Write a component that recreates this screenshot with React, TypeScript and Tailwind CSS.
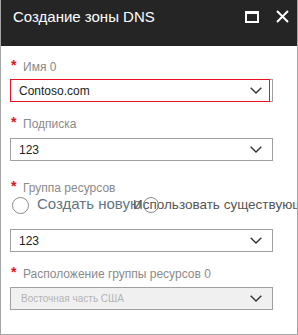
import React from "react";

const font = { fontFamily: '"Liberation Sans", "Noto Sans", Arial, sans-serif' };

function Chevron() {
  return (
    <svg width="12" height="7" viewBox="0 0 12 7" className="shrink-0">
      <path d="M0.7 0.7 L6 6 L11.3 0.7" fill="none" stroke="#333" strokeWidth="1.4" />
    </svg>
  );
}

function Label({ text, size = "text-[12px]" }: { text: string; size?: string }) {
  return (
    <div className="flex items-center h-[16px] pl-[1px]">
      <span className="text-[#e8101a] text-[14px] leading-none -mt-[5px] w-[12px] font-bold">*</span>
      <span className={`${size} text-[#8a8a8a] leading-[16px]`}>{text}</span>
    </div>
  );
}

function Select({
  value,
  disabled = false,
  focused = false,
  className = "",
}: {
  value: string;
  disabled?: boolean;
  focused?: boolean;
  className?: string;
}) {
  return (
    <div
      className={`relative w-[263px] h-[23px] border border-[#a0a0a0] flex items-center justify-between pr-[10px] ${
        disabled ? "bg-[#f0f0f0] pl-[10px]" : "bg-white pl-[8px]"
      } ${className}`}
    >
      {focused && (
        <div className="absolute -left-[1px] -top-[1px] w-[260px] h-[23px] border border-[#e81123] pointer-events-none" />
      )}
      <span className={disabled ? "text-[10px] text-[#b4b4b4]" : "text-[12px] text-[#222]"}>{value}</span>
      <Chevron />
    </div>
  );
}

export default function App() {
  return (
    <div className="w-[298px] h-[335px] bg-white border border-[#a6a6a6] border-t-0 overflow-hidden" style={font}>
      <div className="h-[46px] bg-[#252525] -ml-[1px] flex items-start pt-[7px] pl-[13px] pr-[8px]">
        <span className="text-white text-[15px] leading-[20px] flex-1">Создание зоны DNS</span>
        <div className="flex items-center gap-[17px] mt-[3px]">
          <div className="w-[14px] h-[12px] border-2 border-t-[3px] border-white" />
          <svg width="13" height="13" viewBox="0 0 13 13">
            <path d="M1 1 L12 12 M12 1 L1 12" stroke="white" strokeWidth="2" />
          </svg>
        </div>
      </div>
      <div className="pl-[9px] flex flex-col items-start">
        <div className="mt-[13px]">
          <Label text="Имя 0" />
        </div>
        <Select value="Contoso.com" focused className="mt-[4px]" />

        <div className="mt-[14px]">
          <Label text="Подписка" />
        </div>
        <Select value="123" className="mt-[6px]" />

        <div className="mt-[19px]">
          <Label text="Группа ресурсов" />
        </div>
        <div className="mt-[1px] h-[17px] w-[290px] flex items-center whitespace-nowrap pl-[2px]">
          <div className="w-[17px] h-[17px] shrink-0 rounded-full border border-[#8a8a8a] bg-white" />
          <span className="ml-[8px] text-[15px] leading-[20px] text-[#5f7585] w-[96px] shrink-0 -mt-[3px]">Создать новую</span>
          <span className="text-[13.5px] leading-[20px] text-[#555] -mt-[1px] relative">
            Использовать существующую
            <span className="absolute left-[10px] top-[2px] w-[16px] h-[16px] rounded-full border border-[#8a8a8a]" />
          </span>
        </div>
        <Select value="123" className="mt-[15px]" />

        <div className="mt-[14px]">
          <Label text="Расположение группы ресурсов 0" />
        </div>
        <Select value="Восточная часть США" disabled className="mt-[5px]" />
      </div>
    </div>
  );
}
